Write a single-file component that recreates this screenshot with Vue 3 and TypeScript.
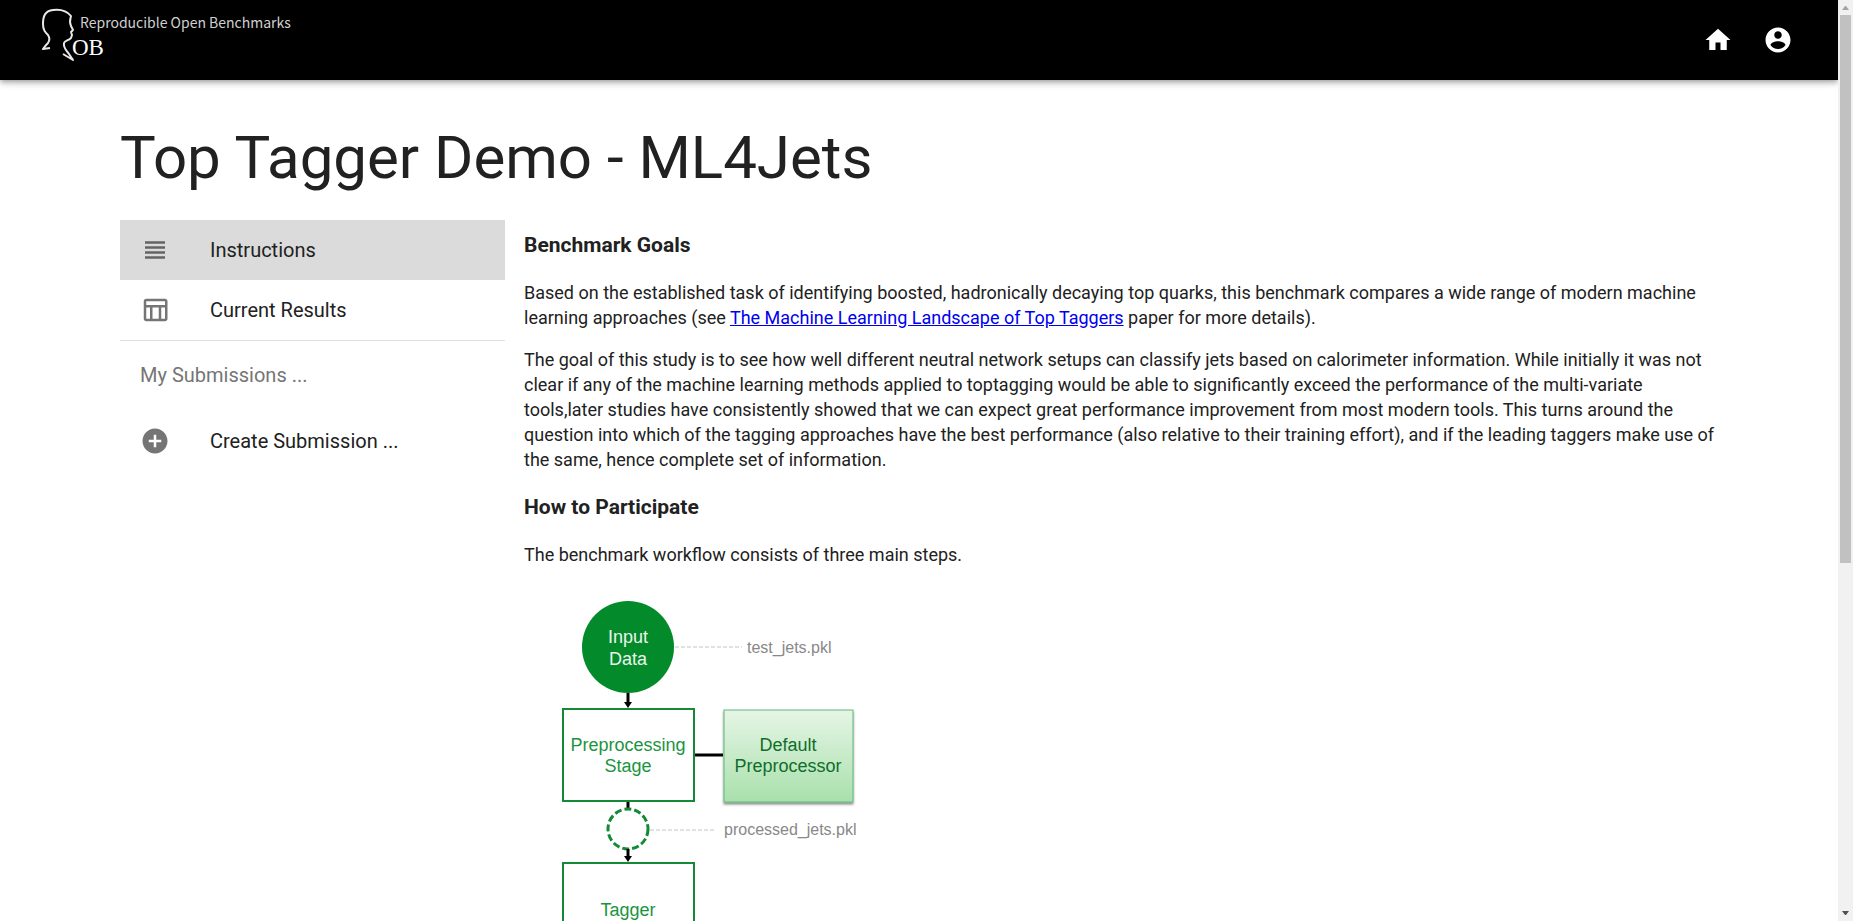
<script setup lang="ts">
interface MenuItem {
  label: string
  icon: string
  selected?: boolean
}

const views: MenuItem[] = [
  {
    label: 'Instructions',
    icon: 'M4 15h16v-2H4v2zm0 4h16v-2H4v2zm0-8h16V9H4v2zm0-6v2h16V5H4z',
    selected: true,
  },
  {
    label: 'Current Results',
    icon: 'M20 3H5c-1.1 0-2 .9-2 2v14c0 1.1.9 2 2 2h15c1.1 0 2-.9 2-2V5c0-1.1-.9-2-2-2zm0 2v3H5V5h15zm-5 14h-5v-9h5v9zM5 10h3v9H5v-9zm12 9v-9h3v9h-3z',
  },
]

const submissionActions: MenuItem[] = [
  {
    label: 'Create Submission ...',
    icon: 'M12 2C6.48 2 2 6.48 2 12s4.48 10 10 10 10-4.48 10-10S17.52 2 12 2zm5 11h-4v4h-2v-4H7v-2h4V7h2v4h4v2z',
  },
]
</script>

<template>
  <div class="window">
    <div class="page">
      <header class="app-bar">
        <svg class="logo" viewBox="0 0 260 62" role="img" aria-label="Reproducible Open Benchmarks">
          <path
            class="logo-head"
            d="M10 48 L3 49 C5 46 6 45 8 43 C10 40 10 38 8 35 C5 32 3 30 3 24 C3 16 5 11 13 10 C21 9 27 11 31 16 C30 20 29 22 31 26 L33 30 L31 32 L32 35 L31 38 C28 41 25 40 24 43 C23 48 27 51 29 54 L33 60 L23 54"
          />
          <text class="logo-name" x="40" y="28">Reproducible Open Benchmarks</text>
          <text class="logo-initials" x="32" y="55">OB</text>
        </svg>
        <nav class="app-actions">
          <button type="button" class="icon-button" aria-label="Home">
            <svg class="icon" viewBox="0 0 24 24"><path d="M10 20v-6h4v6h5v-8h3L12 3 2 12h3v8z" /></svg>
          </button>
          <button type="button" class="icon-button" aria-label="Account">
            <svg class="icon" viewBox="0 0 24 24">
              <path
                d="M12 2C6.48 2 2 6.48 2 12s4.48 10 10 10 10-4.48 10-10S17.52 2 12 2zm0 3c1.66 0 3 1.34 3 3s-1.34 3-3 3-3-1.34-3-3 1.34-3 3-3zm0 14.2c-2.5 0-4.71-1.28-6-3.22.03-1.99 4-3.08 6-3.08 1.99 0 5.97 1.09 6 3.08-1.29 1.94-3.5 3.22-6 3.22z"
              />
            </svg>
          </button>
        </nav>
      </header>

      <main class="container">
        <h1 class="title">Top Tagger Demo - ML4Jets</h1>
        <div class="columns">
          <nav class="sidebar">
            <button
              v-for="item in views"
              :key="item.label"
              type="button"
              class="menu-item"
              :class="{ selected: item.selected }"
            >
              <svg class="icon" viewBox="0 0 24 24"><path :d="item.icon" /></svg>
              <span>{{ item.label }}</span>
            </button>
            <hr class="divider" />
            <p class="subheader">My Submissions ...</p>
            <button v-for="item in submissionActions" :key="item.label" type="button" class="menu-item">
              <svg class="icon" viewBox="0 0 24 24"><path :d="item.icon" /></svg>
              <span>{{ item.label }}</span>
            </button>
          </nav>

          <article class="content">
            <h2>Benchmark Goals</h2>
            <p>
              Based on the established task of identifying boosted, hadronically decaying top quarks, this
              benchmark compares a wide range of modern machine learning approaches (see
              <a href="#paper">The Machine Learning Landscape of Top Taggers</a> paper for more details).
            </p>
            <p>
              The goal of this study is to see how well different neutral network setups can classify jets based
              on calorimeter information. While initially it was not clear if any of the machine learning methods
              applied to toptagging would be able to significantly exceed the performance of the multi-variate
              tools,later studies have consistently showed that we can expect great performance improvement from
              most modern tools. This turns around the question into which of the tagging approaches have the best
              performance (also relative to their training effort), and if the leading taggers make use of the
              same, hence complete set of information.
            </p>
            <h2>How to Participate</h2>
            <p>The benchmark workflow consists of three main steps.</p>

            <svg class="workflow" viewBox="0 0 340 400" role="img" aria-label="Benchmark workflow">
              <defs>
                <linearGradient id="module-fill" x1="0" y1="0" x2="0" y2="1">
                  <stop offset="0" stop-color="#e6f5e6" />
                  <stop offset="1" stop-color="#a9e0ac" />
                </linearGradient>
                <filter id="module-shadow" x="-10%" y="-10%" width="120%" height="120%">
                  <feDropShadow dx="0" dy="2" stdDeviation="1" flood-color="#000" flood-opacity="0.45" />
                </filter>
              </defs>

              <circle cx="104" cy="63" r="46" fill="#038a2b" />
              <text class="on-green" x="104" y="59">Input</text>
              <text class="on-green" x="104" y="81">Data</text>
              <path class="note-line" d="M151 63H218" />
              <text class="note" x="223" y="69">test_jets.pkl</text>

              <path class="link" d="M104 109V121" />
              <path d="M100 118H108L104 124Z" />

              <rect class="stage" x="39" y="125" width="131" height="92" />
              <text class="stage-label" x="104" y="167">Preprocessing</text>
              <text class="stage-label" x="104" y="188">Stage</text>

              <path class="link" d="M171 171H199" />
              <rect class="module" x="200" y="126" width="129" height="92" filter="url(#module-shadow)" />
              <text class="module-label" x="264" y="167">Default</text>
              <text class="module-label" x="264" y="188">Preprocessor</text>

              <path class="link" d="M104 218V225" />
              <circle class="artifact" cx="104" cy="245" r="20" />
              <path class="note-line" d="M126 246H192" />
              <text class="note" x="200" y="251">processed_jets.pkl</text>

              <path class="link" d="M104 265V274" />
              <path d="M100 272H108L104 278Z" />
              <rect class="stage" x="39" y="279" width="131" height="92" />
              <text class="stage-label" x="104" y="332">Tagger</text>
            </svg>
          </article>
        </div>
      </main>
    </div>

    <div class="scrollbar" aria-hidden="true">
      <svg class="arrow arrow-up" viewBox="0 0 15 15"><path d="M4 10h7L8 6H7z" /></svg>
      <div class="track"><div class="thumb"></div></div>
      <svg class="arrow arrow-down" viewBox="0 0 15 15"><path d="M4 5h7L8 9H7z" /></svg>
    </div>
  </div>
</template>

<style>
body {
  margin: 0;
}
</style>

<style scoped>
.window {
  display: grid;
  grid-template-columns: minmax(0, 1fr) 15px;
  height: 100vh;
  overflow: hidden;
  background: #fff;
  color: #212121;
  font-family: Roboto, 'Liberation Sans', sans-serif;
}

.page {
  min-width: 0;
  overflow: hidden;
}

.app-bar {
  display: flex;
  align-items: center;
  justify-content: space-between;
  box-sizing: border-box;
  height: 80px;
  padding: 0 30px 0 40px;
  background: #000;
  box-shadow:
    0 2px 4px -1px rgba(0, 0, 0, 0.2),
    0 4px 5px 0 rgba(0, 0, 0, 0.14),
    0 1px 10px 0 rgba(0, 0, 0, 0.12);
}

.logo {
  align-self: flex-start;
  width: 260px;
  height: 62px;
}

.logo-head {
  fill: none;
  stroke: #e8e8e8;
  stroke-width: 2;
  stroke-linejoin: round;
}

.logo-name {
  fill: #d0d0d0;
  font-family: 'Noto Sans CJK SC', 'Noto Sans', sans-serif;
  font-size: 14px;
}

.logo-initials {
  fill: #fff;
  font-family: 'Liberation Serif', serif;
  font-size: 23px;
}

.app-actions {
  display: flex;
}

.icon-button {
  display: flex;
  padding: 15px;
  border: 0;
  background: none;
  color: #fff;
  cursor: pointer;
}

.icon {
  flex: none;
  width: 30px;
  height: 30px;
  fill: currentColor;
}

.container {
  padding: 43px 120px 0;
}

.title {
  margin: 0 0 27px;
  font-size: 60px;
  font-weight: 400;
  line-height: 70px;
}

.columns {
  display: grid;
  grid-template-columns: 385px minmax(0, 1fr);
  gap: 19px;
}

.menu-item {
  display: flex;
  align-items: center;
  gap: 40px;
  width: 100%;
  height: 60px;
  padding: 0 20px;
  border: 0;
  background: none;
  color: inherit;
  font: inherit;
  font-size: 20px;
  line-height: 30px;
  text-align: left;
  cursor: pointer;
}

.menu-item.selected {
  background: #dbdbdb;
}

.menu-item .icon {
  color: rgba(0, 0, 0, 0.54);
}

.divider {
  height: 1px;
  margin: 0;
  border: 0;
  background: #e0e0e0;
}

.subheader {
  margin: 4px 0 6px;
  padding: 0 20px;
  color: #757575;
  font-size: 20px;
  line-height: 60px;
}

.content {
  padding-top: 13px;
}

.content h2 {
  margin: 0 0 22px;
  font-size: 21px;
  font-weight: 700;
  line-height: 25px;
}

.content p {
  margin: 0 0 17px;
  font-size: 18px;
  line-height: 25px;
}

.content p + h2 {
  margin-top: 23px;
}

.content a {
  color: #0000ee;
}

.workflow {
  display: block;
  width: 340px;
  height: 400px;
  font-family: 'Liberation Sans', Arial, sans-serif;
  font-size: 18px;
  text-anchor: middle;
}

.on-green {
  fill: #eaf6ea;
}

.note {
  fill: #888;
  font-size: 16px;
  text-anchor: start;
}

.note-line {
  fill: none;
  stroke: #c4c4c4;
  stroke-width: 1;
  stroke-dasharray: 4 2;
}

.link {
  fill: none;
  stroke: #000;
  stroke-width: 3;
}

.stage {
  fill: #fff;
  stroke: #128a36;
  stroke-width: 2;
}

.stage-label {
  fill: #1b9440;
}

.module {
  fill: url(#module-fill);
  stroke: #5fb878;
  stroke-width: 1;
}

.module-label {
  fill: #0f6e2a;
}

.artifact {
  fill: #fff;
  stroke: #128a36;
  stroke-width: 3;
  stroke-dasharray: 7 3;
}

.scrollbar {
  display: flex;
  flex-direction: column;
  background: #f1f1f1;
}

.arrow {
  flex: none;
  width: 15px;
  height: 15px;
}

.arrow-up {
  fill: #a3a3a3;
}

.arrow-down {
  fill: #505050;
}

.track {
  flex: 1;
  padding: 0 2px;
}

.thumb {
  height: 61.5%;
  background: #c1c1c1;
}
</style>
